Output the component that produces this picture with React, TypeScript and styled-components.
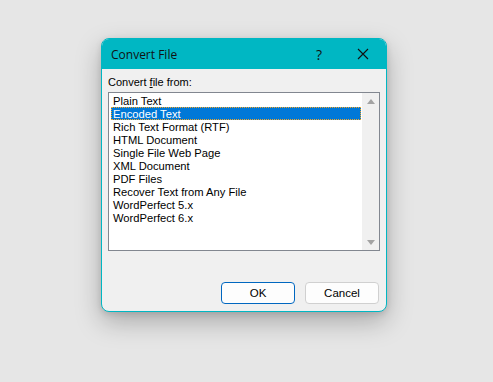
import React from 'react';
import styled, { createGlobalStyle } from 'styled-components';

const Global = createGlobalStyle`
    html, body {
        margin: 0;
        padding: 0;
        background: #e6e6e6;
    }
`;

const Page = styled.div`
    width: 493px;
    height: 382px;
    box-sizing: border-box;
    padding: 38px 0 0 101px;
    font-family: "Liberation Sans", Arial, sans-serif;
`;

const Dialog = styled.div`
    width: 286px;
    height: 274px;
    box-sizing: border-box;
    border: 1px solid #00b7c3;
    border-radius: 8px;
    background: #f0f0f0;
    overflow: hidden;
    display: flex;
    flex-direction: column;
    box-shadow: 0 10px 26px rgba(0, 0, 0, 0.26), 0 2px 6px rgba(0, 0, 0, 0.12);
`;

const TitleBar = styled.div`
    height: 30px;
    background: #00b7c3;
    display: flex;
    align-items: center;
    padding-left: 9px;
    font-family: "Open Sans", "Noto Sans", sans-serif;
    font-size: 12px;
    color: #111;
`;

const Title = styled.div`
    flex: 1;
`;

const TitleButton = styled.div<{ $w: number }>`
    width: ${p => p.$w}px;
    height: 30px;
    display: flex;
    align-items: center;
    justify-content: center;
    font-size: 14px;
`;

const Body = styled.div`
    flex: 1;
    display: flex;
    flex-direction: column;
    padding: 7px 6px 7px 6px;
`;

const Label = styled.div`
    font-size: 11px;
    color: #000;
    height: 13px;
    line-height: 13px;
    margin-bottom: 3px;
    u { text-decoration-thickness: 1px; }
`;

const ListBox = styled.div`
    height: 159px;
    box-sizing: border-box;
    border: 1px solid #828790;
    background: #fff;
    display: flex;
`;

const Items = styled.div`
    flex: 1;
    padding: 1px 1px 0 2px;
`;

const Item = styled.div<{ $selected?: boolean }>`
    height: 13px;
    line-height: 14px;
    box-sizing: border-box;
    padding-left: 2px;
    font-size: 11.2px;
    white-space: nowrap;
    color: ${p => (p.$selected ? '#fff' : '#000')};
    background: ${p => (p.$selected ? '#0078d7' : 'transparent')};
    outline: ${p => (p.$selected ? '1px dotted #f5a623' : 'none')};
    outline-offset: -1px;
`;

const ScrollBar = styled.div`
    width: 17px;
    background: #f0f0f0;
    display: flex;
    flex-direction: column;
    justify-content: space-between;
    align-items: center;
    padding: 6px 0 5px;
`;

const Arrow = styled.div<{ $down?: boolean }>`
    width: 0;
    height: 0;
    border-left: 4px solid transparent;
    border-right: 4px solid transparent;
    ${p =>
        p.$down
            ? 'border-top: 5px solid #a3a3a3;'
            : 'border-bottom: 5px solid #a3a3a3;'}
`;

const Footer = styled.div`
    margin-top: auto;
    display: flex;
    justify-content: flex-end;
    gap: 10px;
    padding-right: 1px;
`;

const Button = styled.button<{ $primary?: boolean }>`
    width: 74px;
    height: 22px;
    box-sizing: border-box;
    border-radius: 4px;
    border: 1px solid ${p => (p.$primary ? '#0067c0' : '#d0d0d0')};
    background: #fdfdfd;
    font-family: "Liberation Sans", Arial, sans-serif;
    font-size: 11.5px;
    color: #000;
    padding: 0;
`;

const formats = [
    'Plain Text',
    'Encoded Text',
    'Rich Text Format (RTF)',
    'HTML Document',
    'Single File Web Page',
    'XML Document',
    'PDF Files',
    'Recover Text from Any File',
    'WordPerfect 5.x',
    'WordPerfect 6.x',
];

export default function App() {
    return (
        <Page>
            <Global />
            <Dialog>
                <TitleBar>
                    <Title>Convert File</Title>
                    <TitleButton $w={42}>?</TitleButton>
                    <TitleButton $w={46}>
                        <svg width="12" height="12" viewBox="0 0 12 12">
                            <path d="M1 1 L11 11 M11 1 L1 11" stroke="#111" strokeWidth="1.1" />
                        </svg>
                    </TitleButton>
                </TitleBar>
                <Body>
                    <Label>
                        Convert <u>f</u>ile from:
                    </Label>
                    <ListBox>
                        <Items>
                            {formats.map((f, i) => (
                                <Item key={f} $selected={i === 1}>
                                    {f}
                                </Item>
                            ))}
                        </Items>
                        <ScrollBar>
                            <Arrow />
                            <Arrow $down />
                        </ScrollBar>
                    </ListBox>
                    <Footer>
                        <Button $primary>OK</Button>
                        <Button>Cancel</Button>
                    </Footer>
                </Body>
            </Dialog>
        </Page>
    );
}
